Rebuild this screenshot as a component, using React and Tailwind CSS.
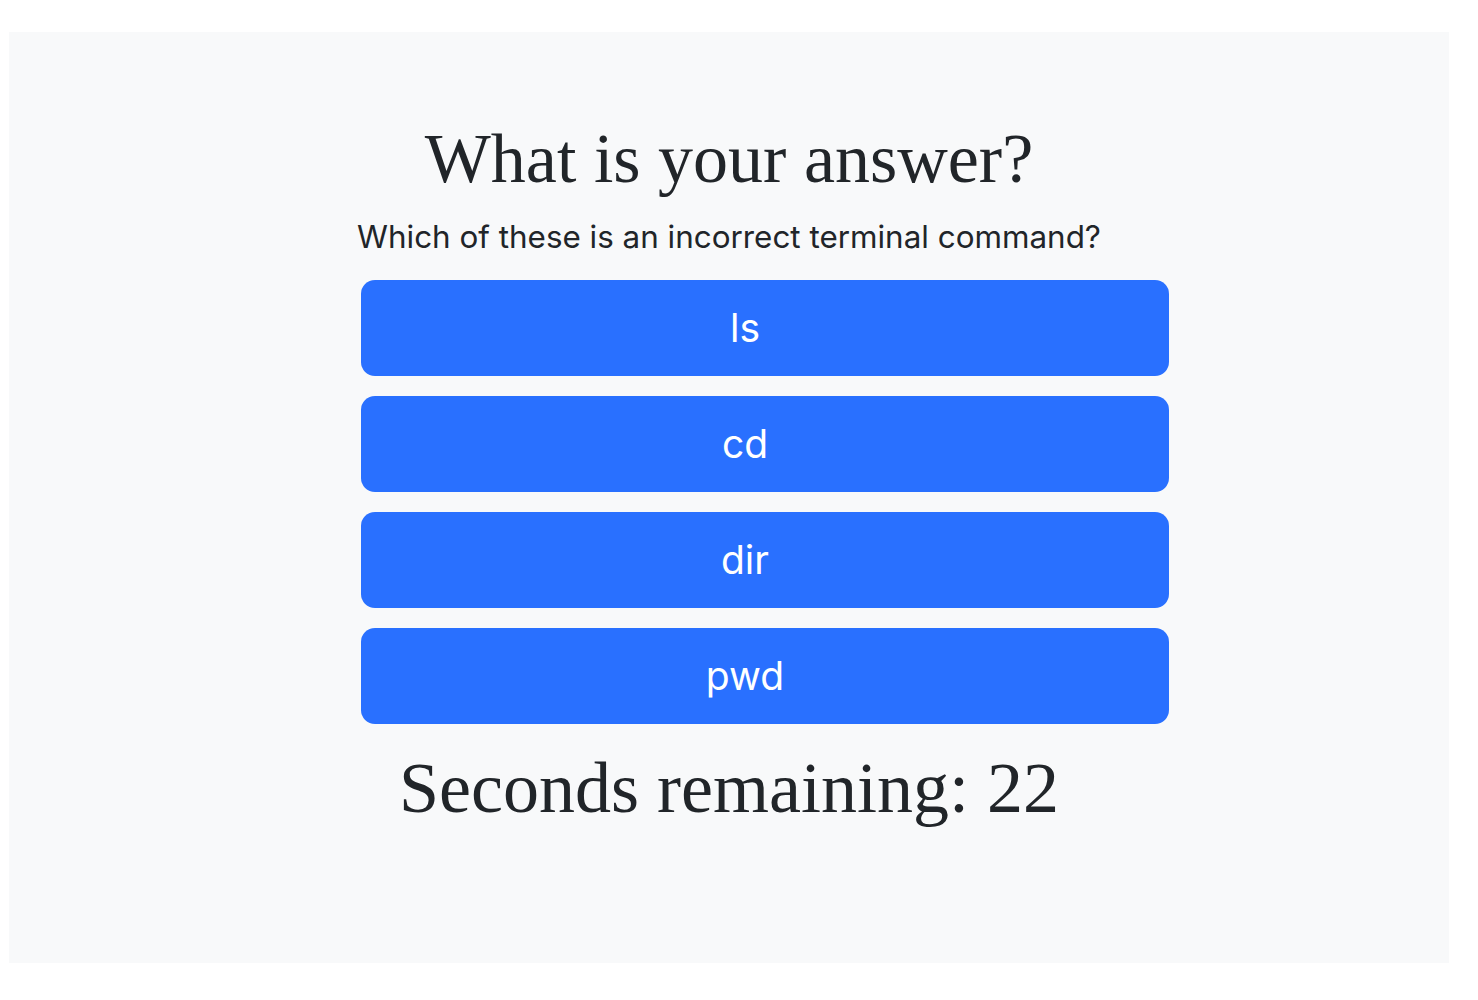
const choices = ['ls', 'cd', 'dir', 'pwd'];

export default function App() {
  return (
    <div className="min-h-screen bg-white pt-[32px] px-[9px]" style={{ fontFamily: 'Inter, "Noto Sans", sans-serif' }}>
      <div className="w-[1440px] h-[931px] bg-[#f8f9fa] flex flex-col items-center text-[#212529]">
        <h1 className="mt-[92px] text-[70px] leading-[1] font-['Liberation_Serif',serif]">
          What is your answer?
        </h1>
        <p className="mt-[28px] text-[31.4px] leading-[1] font-['Inter',sans-serif]">
          Which of these is an incorrect terminal command?
        </p>
        <div className="mt-[26.6px] flex flex-col gap-[20px] w-[808px] translate-x-[36px]">
          {choices.map((c) => (
            <button
              key={c}
              type="button"
              className="h-[96px] w-full rounded-[14px] bg-[#2970ff] pr-[40px] text-white text-[39px] font-['Inter',sans-serif]"
            >
              {c}
            </button>
          ))}
        </div>
        <h2 className="mt-[28px] text-[72px] leading-[1] font-['Liberation_Serif',serif]">
          Seconds remaining: 22
        </h2>
      </div>
    </div>
  );
}
